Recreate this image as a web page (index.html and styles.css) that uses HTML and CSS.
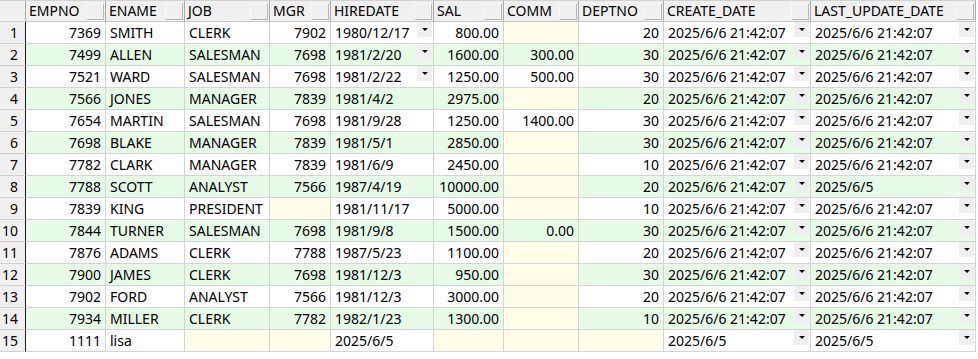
FILE: index.html
```html
<!DOCTYPE html>
<html>
<head>
<meta charset="utf-8">
<link rel="stylesheet" href="styles.css">
</head>
<body>
<table class="grid">
  <colgroup>
    <col class="c-rn"><col class="c-empno"><col class="c-ename"><col class="c-job"><col class="c-mgr"><col class="c-hire"><col class="c-sal"><col class="c-comm"><col class="c-dept"><col class="c-create"><col class="c-last">
  </colgroup>
  <thead>
    <tr>
      <th class="rn"></th>
      <th><div class="hd"><span>EMPNO</span><span class="hbtn"></span></div></th>
      <th><div class="hd"><span>ENAME</span><span class="hbtn"></span></div></th>
      <th><div class="hd"><span>JOB</span><span class="hbtn"></span></div></th>
      <th><div class="hd"><span>MGR</span><span class="hbtn"></span></div></th>
      <th><div class="hd"><span>HIREDATE</span><span class="hbtn"></span></div></th>
      <th><div class="hd"><span>SAL</span><span class="hbtn"></span></div></th>
      <th><div class="hd"><span>COMM</span><span class="hbtn"></span></div></th>
      <th><div class="hd"><span>DEPTNO</span><span class="hbtn"></span></div></th>
      <th><div class="hd"><span>CREATE_DATE</span><span class="hbtn"></span></div></th>
      <th><div class="hd"><span>LAST_UPDATE_DATE</span><span class="hbtn"></span></div></th>
    </tr>
  </thead>
  <tbody>
    <tr>
      <td class="rn">1</td><td class="num">7369</td><td>SMITH</td><td>CLERK</td><td class="num">7902</td>
      <td><div class="dt"><span>1980/12/17</span><span class="dd"></span></div></td>
      <td class="num">800.00</td><td class="null"></td><td class="num">20</td>
      <td><div class="dt"><span>2025/6/6 21:42:07</span><span class="dd"></span></div></td>
      <td><div class="dt"><span>2025/6/6 21:42:07</span><span class="dd"></span></div></td>
    </tr>
    <tr class="alt">
      <td class="rn">2</td><td class="num">7499</td><td>ALLEN</td><td>SALESMAN</td><td class="num">7698</td>
      <td><div class="dt"><span>1981/2/20</span><span class="dd"></span></div></td>
      <td class="num">1600.00</td><td class="num">300.00</td><td class="num">30</td>
      <td><div class="dt"><span>2025/6/6 21:42:07</span><span class="dd"></span></div></td>
      <td><div class="dt"><span>2025/6/6 21:42:07</span><span class="dd"></span></div></td>
    </tr>
    <tr>
      <td class="rn">3</td><td class="num">7521</td><td>WARD</td><td>SALESMAN</td><td class="num">7698</td>
      <td><div class="dt"><span>1981/2/22</span><span class="dd"></span></div></td>
      <td class="num">1250.00</td><td class="num">500.00</td><td class="num">30</td>
      <td><div class="dt"><span>2025/6/6 21:42:07</span><span class="dd"></span></div></td>
      <td><div class="dt"><span>2025/6/6 21:42:07</span><span class="dd"></span></div></td>
    </tr>
    <tr class="alt">
      <td class="rn">4</td><td class="num">7566</td><td>JONES</td><td>MANAGER</td><td class="num">7839</td>
      <td>1981/4/2</td>
      <td class="num">2975.00</td><td class="null"></td><td class="num">20</td>
      <td><div class="dt"><span>2025/6/6 21:42:07</span><span class="dd"></span></div></td>
      <td><div class="dt"><span>2025/6/6 21:42:07</span><span class="dd"></span></div></td>
    </tr>
    <tr>
      <td class="rn">5</td><td class="num">7654</td><td>MARTIN</td><td>SALESMAN</td><td class="num">7698</td>
      <td>1981/9/28</td>
      <td class="num">1250.00</td><td class="num">1400.00</td><td class="num">30</td>
      <td><div class="dt"><span>2025/6/6 21:42:07</span><span class="dd"></span></div></td>
      <td><div class="dt"><span>2025/6/6 21:42:07</span><span class="dd"></span></div></td>
    </tr>
    <tr class="alt">
      <td class="rn">6</td><td class="num">7698</td><td>BLAKE</td><td>MANAGER</td><td class="num">7839</td>
      <td>1981/5/1</td>
      <td class="num">2850.00</td><td class="null"></td><td class="num">30</td>
      <td><div class="dt"><span>2025/6/6 21:42:07</span><span class="dd"></span></div></td>
      <td><div class="dt"><span>2025/6/6 21:42:07</span><span class="dd"></span></div></td>
    </tr>
    <tr>
      <td class="rn">7</td><td class="num">7782</td><td>CLARK</td><td>MANAGER</td><td class="num">7839</td>
      <td>1981/6/9</td>
      <td class="num">2450.00</td><td class="null"></td><td class="num">10</td>
      <td><div class="dt"><span>2025/6/6 21:42:07</span><span class="dd"></span></div></td>
      <td><div class="dt"><span>2025/6/6 21:42:07</span><span class="dd"></span></div></td>
    </tr>
    <tr class="alt">
      <td class="rn">8</td><td class="num">7788</td><td>SCOTT</td><td>ANALYST</td><td class="num">7566</td>
      <td>1987/4/19</td>
      <td class="num">10000.00</td><td class="null"></td><td class="num">20</td>
      <td><div class="dt"><span>2025/6/6 21:42:07</span><span class="dd"></span></div></td>
      <td><div class="dt"><span>2025/6/5</span><span class="dd"></span></div></td>
    </tr>
    <tr>
      <td class="rn">9</td><td class="num">7839</td><td>KING</td><td>PRESIDENT</td><td class="null"></td>
      <td>1981/11/17</td>
      <td class="num">5000.00</td><td class="null"></td><td class="num">10</td>
      <td><div class="dt"><span>2025/6/6 21:42:07</span><span class="dd"></span></div></td>
      <td><div class="dt"><span>2025/6/6 21:42:07</span><span class="dd"></span></div></td>
    </tr>
    <tr class="alt">
      <td class="rn">10</td><td class="num">7844</td><td>TURNER</td><td>SALESMAN</td><td class="num">7698</td>
      <td>1981/9/8</td>
      <td class="num">1500.00</td><td class="num">0.00</td><td class="num">30</td>
      <td><div class="dt"><span>2025/6/6 21:42:07</span><span class="dd"></span></div></td>
      <td><div class="dt"><span>2025/6/6 21:42:07</span><span class="dd"></span></div></td>
    </tr>
    <tr>
      <td class="rn">11</td><td class="num">7876</td><td>ADAMS</td><td>CLERK</td><td class="num">7788</td>
      <td>1987/5/23</td>
      <td class="num">1100.00</td><td class="null"></td><td class="num">20</td>
      <td><div class="dt"><span>2025/6/6 21:42:07</span><span class="dd"></span></div></td>
      <td><div class="dt"><span>2025/6/6 21:42:07</span><span class="dd"></span></div></td>
    </tr>
    <tr class="alt">
      <td class="rn">12</td><td class="num">7900</td><td>JAMES</td><td>CLERK</td><td class="num">7698</td>
      <td>1981/12/3</td>
      <td class="num">950.00</td><td class="null"></td><td class="num">30</td>
      <td><div class="dt"><span>2025/6/6 21:42:07</span><span class="dd"></span></div></td>
      <td><div class="dt"><span>2025/6/6 21:42:07</span><span class="dd"></span></div></td>
    </tr>
    <tr>
      <td class="rn">13</td><td class="num">7902</td><td>FORD</td><td>ANALYST</td><td class="num">7566</td>
      <td>1981/12/3</td>
      <td class="num">3000.00</td><td class="null"></td><td class="num">20</td>
      <td><div class="dt"><span>2025/6/6 21:42:07</span><span class="dd"></span></div></td>
      <td><div class="dt"><span>2025/6/6 21:42:07</span><span class="dd"></span></div></td>
    </tr>
    <tr class="alt">
      <td class="rn">14</td><td class="num">7934</td><td>MILLER</td><td>CLERK</td><td class="num">7782</td>
      <td>1982/1/23</td>
      <td class="num">1300.00</td><td class="null"></td><td class="num">10</td>
      <td><div class="dt"><span>2025/6/6 21:42:07</span><span class="dd"></span></div></td>
      <td><div class="dt"><span>2025/6/6 21:42:07</span><span class="dd"></span></div></td>
    </tr>
    <tr>
      <td class="rn">15</td><td class="num">1111</td><td>lisa</td><td class="null"></td><td class="null"></td>
      <td>2025/6/5</td>
      <td class="null"></td><td class="null"></td><td class="null"></td>
      <td><div class="dt"><span>2025/6/5</span><span class="dd"></span></div></td>
      <td><div class="dt"><span>2025/6/5</span><span class="dd"></span></div></td>
    </tr>
  </tbody>
</table>
</body>
</html>
```
FILE: styles.css
```css
html, body {
  margin: 0;
  padding: 0;
  background: #ffffff;
}

.grid {
  table-layout: fixed;
  width: 976px;
  border-collapse: separate;
  border-spacing: 0;
  font-family: "Noto Sans", "Segoe UI", sans-serif;
  font-size: 14px;
  color: #000;
}

.c-rn { width: 26px; }
.c-empno { width: 80px; }
.c-ename { width: 79px; }
.c-job { width: 85px; }
.c-mgr { width: 61px; }
.c-hire { width: 103px; }
.c-sal { width: 70px; }
.c-comm { width: 75px; }
.c-dept { width: 85px; }
.c-create { width: 147px; }
.c-last { width: 165px; }

.grid th,
.grid td {
  box-sizing: border-box;
  height: 22px;
  padding: 0 4px;
  line-height: 20px;
  white-space: nowrap;
  overflow: hidden;
  text-align: left;
  font-weight: normal;
  border-right: 1px solid #d4d4d4;
  border-bottom: 1px solid #d4d4d4;
  vertical-align: middle;
}

.grid thead th {
  background: #f0f0f0;
  border-top: 1px solid #d2d2d2;
  border-right: 1px solid #ababab;
  border-bottom: 1px solid #c8c8c8;
  padding: 0 1px 0 3px;
  vertical-align: top;
}

.hd {
  display: flex;
  justify-content: space-between;
  align-items: flex-start;
  height: 20px;
  line-height: 20px;
}

.hbtn {
  flex: none;
  box-sizing: border-box;
  width: 18px;
  height: 17px;
  margin-top: 2px;
  background: #f0f0f0;
  border-top: 1px solid #f8f8f8;
  border-left: 1px solid #f8f8f8;
  border-right: 1px solid #b8b8b8;
  border-bottom: 1px solid #b8b8b8;
}

.grid .rn {
  background: #f0f0f0;
  border-right: 1px solid #1a1a1a;
  border-bottom: 1px solid #d0d0d0;
  text-align: right;
  padding: 0 7px 0 0;
}

.grid thead th.rn {
  border-right: 1px solid #ababab;
}

.grid td.num {
  text-align: right;
  padding-right: 4px;
}

.alt td {
  background: #e6fbe6;
}

.grid td.null {
  background: #fffde8;
}

.grid td:has(.dt) {
  padding: 0 1px 0 4px;
  vertical-align: top;
}

.dt {
  display: flex;
  justify-content: space-between;
  align-items: flex-start;
  height: 21px;
  line-height: 21px;
}

.dd {
  flex: none;
  box-sizing: border-box;
  width: 15px;
  height: 15px;
  margin-top: 0;
  background: #efefef;
  display: flex;
  justify-content: center;
  padding-top: 6px;
}

.dd::before {
  content: "";
  width: 0;
  height: 0;
  border-left: 3px solid transparent;
  border-right: 3px solid transparent;
  border-top: 3px solid #000;
}
```
